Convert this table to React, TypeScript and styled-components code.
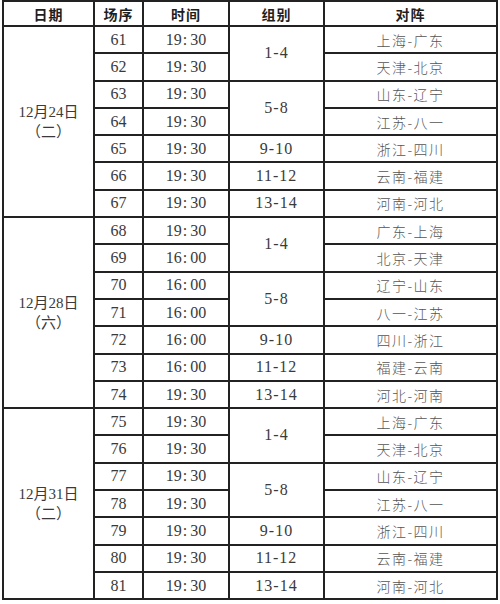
import styled, { createGlobalStyle } from "styled-components";

interface Match {
  no: number;
  time: string;
  group?: string;
  span?: number;
  teams: string;
}

interface Day {
  date: string;
  weekday: string;
  matches: Match[];
}

const days: Day[] = [
  {
    date: "12月24日",
    weekday: "（二）",
    matches: [
      { no: 61, time: "19:30", group: "1-4", span: 2, teams: "上海-广东" },
      { no: 62, time: "19:30", teams: "天津-北京" },
      { no: 63, time: "19:30", group: "5-8", span: 2, teams: "山东-辽宁" },
      { no: 64, time: "19:30", teams: "江苏-八一" },
      { no: 65, time: "19:30", group: "9-10", teams: "浙江-四川" },
      { no: 66, time: "19:30", group: "11-12", teams: "云南-福建" },
      { no: 67, time: "19:30", group: "13-14", teams: "河南-河北" },
    ],
  },
  {
    date: "12月28日",
    weekday: "（六）",
    matches: [
      { no: 68, time: "19:30", group: "1-4", span: 2, teams: "广东-上海" },
      { no: 69, time: "16:00", teams: "北京-天津" },
      { no: 70, time: "16:00", group: "5-8", span: 2, teams: "辽宁-山东" },
      { no: 71, time: "16:00", teams: "八一-江苏" },
      { no: 72, time: "16:00", group: "9-10", teams: "四川-浙江" },
      { no: 73, time: "16:00", group: "11-12", teams: "福建-云南" },
      { no: 74, time: "19:30", group: "13-14", teams: "河北-河南" },
    ],
  },
  {
    date: "12月31日",
    weekday: "（二）",
    matches: [
      { no: 75, time: "19:30", group: "1-4", span: 2, teams: "上海-广东" },
      { no: 76, time: "19:30", teams: "天津-北京" },
      { no: 77, time: "19:30", group: "5-8", span: 2, teams: "山东-辽宁" },
      { no: 78, time: "19:30", teams: "江苏-八一" },
      { no: 79, time: "19:30", group: "9-10", teams: "浙江-四川" },
      { no: 80, time: "19:30", group: "11-12", teams: "云南-福建" },
      { no: 81, time: "19:30", group: "13-14", teams: "河南-河北" },
    ],
  },
];

// 时间里冒号后面有一点空隙，跟原表一样
const TimeText = ({ value }: { value: string }) => {
  const [h, m] = value.split(":");
  return (
    <>
      {h}
      <Colon>:</Colon>
      {m}
    </>
  );
};

const App = () => {
  return (
    <>
      <GlobalStyle />
      <Page>
        <Schedule>
          <colgroup>
            <col style={{ width: 91 }} />
            <col style={{ width: 49 }} />
            <col style={{ width: 86 }} />
            <col style={{ width: 95 }} />
            <col />
          </colgroup>
          <thead>
            <HeadRow>
              <HeadCell>日期</HeadCell>
              <HeadCell>场序</HeadCell>
              <HeadCell>时间</HeadCell>
              <HeadCell>组别</HeadCell>
              <HeadCell>对阵</HeadCell>
            </HeadRow>
          </thead>
          {days.map((day) => (
            <tbody key={day.date + day.matches[0].no}>
              {day.matches.map((m, i) => (
                <BodyRow key={m.no}>
                  {i === 0 && (
                    <DateCell rowSpan={day.matches.length}>
                      {day.date}
                      <br />
                      {day.weekday}
                    </DateCell>
                  )}
                  <NumCell>{m.no}</NumCell>
                  <NumCell>
                    <TimeText value={m.time} />
                  </NumCell>
                  {m.group && (
                    <GroupCell rowSpan={m.span ?? 1}>{m.group}</GroupCell>
                  )}
                  <TeamCell>{m.teams}</TeamCell>
                </BodyRow>
              ))}
            </tbody>
          ))}
        </Schedule>
      </Page>
    </>
  );
};

const GlobalStyle = createGlobalStyle`
  body {
    margin: 0;
    background: #ffffff;
    font-family: "Liberation Serif", "Noto Sans CJK SC", serif;
  }
`;

const Page = styled.div`
  width: 500px;
  height: 604px;
  padding: 0 2px;
  box-sizing: border-box;
  background: #fff;
`;

const Schedule = styled.table`
  width: 496px;
  border-collapse: collapse;
  table-layout: fixed;
  border: 2px solid #1c1c1c;

  td,
  th {
    border: 2px solid #222;
    padding: 0;
    text-align: center;
    vertical-align: middle;
  }
`;

const HeadRow = styled.tr`
  height: 25px;
`;

const HeadCell = styled.th`
  font-family: "Noto Sans CJK SC", sans-serif;
  font-size: 14px;
  font-weight: 700;
  color: #1e1e1e;
  letter-spacing: 1px;
  line-height: 1;
`;

const BodyRow = styled.tr`
  height: 27.3px;
`;

const DateCell = styled.td`
  font-family: "Liberation Serif", "Noto Sans CJK SC", serif;
  font-size: 15px;
  line-height: 20px;
  color: #3a3a3a;
`;

const NumCell = styled.td`
  font-family: "Liberation Serif", serif;
  font-size: 16px;
  color: #3a3a3a;
  line-height: 1;
`;

const GroupCell = styled(NumCell)`
  letter-spacing: 1px;
`;

const Colon = styled.span`
  margin: 0 3px 0 1px;
`;

const TeamCell = styled.td`
  font-family: "Noto Sans CJK SC", sans-serif;
  font-size: 14px;
  font-weight: 300;
  color: #555;
  letter-spacing: 1.5px;
  line-height: 1;
`;

export default App;
